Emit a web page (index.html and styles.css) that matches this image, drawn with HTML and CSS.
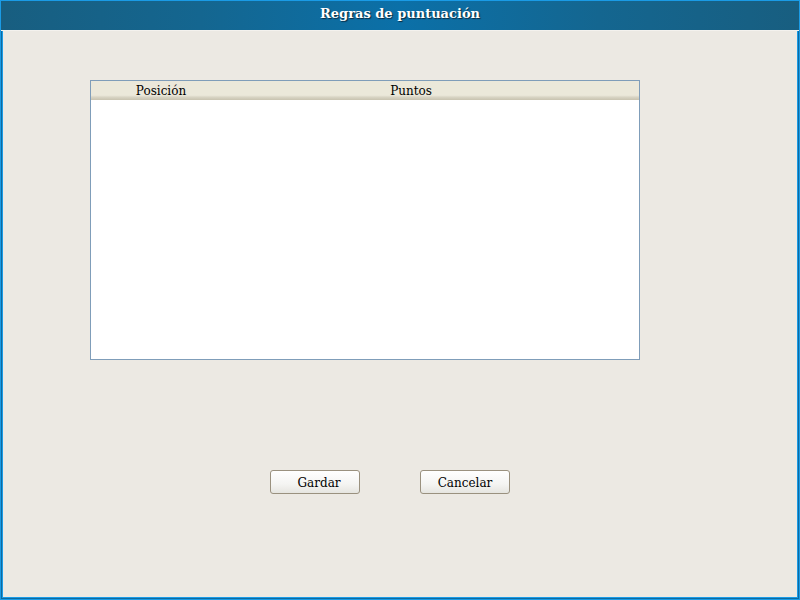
FILE: index.html
```html
<!DOCTYPE html>
<html>
<head>
<meta charset="utf-8">
<link rel="stylesheet" href="styles.css">
</head>
<body>
<div class="window">
  <div class="titlebar">Regras de puntuación</div>
  <div class="content">
    <div class="table">
      <div class="thead">
        <div class="col col1">Posición</div>
        <div class="col col2">Puntos</div>
      </div>
      <div class="tbody"></div>
    </div>
    <div class="buttons">
      <button class="btn btn-save">Gardar</button>
      <button class="btn">Cancelar</button>
    </div>
  </div>
</div>
</body>
</html>
```
FILE: styles.css
```css
html, body { margin: 0; padding: 0; }
body { width: 800px; height: 600px; overflow: hidden; font-family: "DejaVu Serif", serif; }
.window {
  box-sizing: border-box;
  width: 800px; height: 600px;
  border: 1px solid #1a9be6;
  background: #ece9e3;
  display: flex; flex-direction: column;
  box-shadow: inset 0 0 0 1px #0d6aa0, inset 0 0 0 2px #1a9be6;
}
.titlebar {
  height: 29px;
  background: linear-gradient(to right, #185e80 0%, #146690 25%, #0b70a8 50%, #146690 75%, #185e80 100%);
  color: #fff;
  font-weight: bold;
  font-size: 13px;
  text-align: center;
  line-height: 26px;
  text-shadow: 1px 1px 1px #0a2a40;
  border-bottom: 1px solid #f4f2ee;
}
.content {
  flex: 1;
  margin: 0 2px 2px 1px;
  padding: 49px 0 0 88px;
}
.table {
  width: 548px; height: 278px;
  border: 1px solid #7f9db9;
  background: #fff;
  display: flex; flex-direction: column;
}
.thead {
  height: 19px;
  display: flex;
  background: linear-gradient(to bottom, #ebe8da 0%, #ebe8da 75%, #d8d4c4 85%, #c8c3b0 100%);
  font-size: 12px;
  line-height: 21px;
  color: #000;
}
.col { text-align: center; }
.col1 { width: 140px; }
.col2 { width: 360px; }
.tbody { flex: 1; }
.buttons {
  display: flex;
  gap: 60px;
  margin: 110px 0 0 180px;
}
.btn {
  width: 90px; height: 24px;
  font-family: "DejaVu Serif", serif;
  font-size: 12px;
  color: #000;
  border: 1px solid #9a917f;
  border-radius: 3px;
  background: linear-gradient(to bottom, #ffffff 0%, #f4f4f2 60%, #e6e5e0 100%);
  padding: 2px 0 0 0;
}
.btn-save { padding-left: 8px; }
```
